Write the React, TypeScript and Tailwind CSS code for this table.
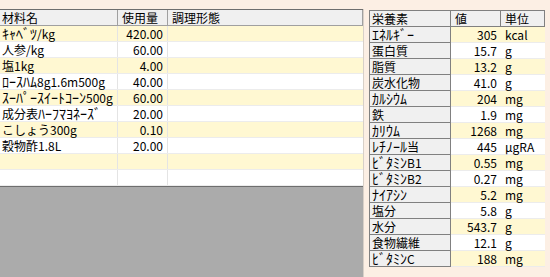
import React from "react";

const ingredients: [string, string][] = [
  ["ｷｬﾍﾞﾂ/kg", "420.00"],
  ["人参/kg", "60.00"],
  ["塩1kg", "4.00"],
  ["ﾛｰｽﾊﾑ8g1.6m500g", "40.00"],
  ["ｽｰﾊﾟｰｽｲｰﾄｺｰﾝ500g", "60.00"],
  ["成分表ﾊｰﾌﾏﾖﾈｰｽﾞ", "20.00"],
  ["こしょう300g", "0.10"],
  ["穀物酢1.8L", "20.00"],
  ["", ""],
  ["", ""],
];

const nutrients: [string, string, string][] = [
  ["ｴﾈﾙｷﾞｰ", "305", "kcal"],
  ["蛋白質", "15.7", "g"],
  ["脂質", "13.2", "g"],
  ["炭水化物", "41.0", "g"],
  ["ｶﾙｼｳﾑ", "204", "mg"],
  ["鉄", "1.9", "mg"],
  ["ｶﾘｳﾑ", "1268", "mg"],
  ["ﾚﾁﾉｰﾙ当", "445", "μgRA"],
  ["ﾋﾞﾀﾐﾝB1", "0.55", "mg"],
  ["ﾋﾞﾀﾐﾝB2", "0.27", "mg"],
  ["ﾅｲｱｼﾝ", "5.2", "mg"],
  ["塩分", "5.8", "g"],
  ["水分", "543.7", "g"],
  ["食物繊維", "12.1", "g"],
  ["ﾋﾞﾀﾐﾝC", "188", "mg"],
];

const font = { fontFamily: '"Noto Sans CJK JP", "Noto Sans", sans-serif' };

function Label({ text }: { text: string }) {
  const parts = text.split(/([\uFF61-\uFF9F]+)/);
  return (
    <>
      {parts.map((p, i) =>
        /[\uFF61-\uFF9F]/.test(p) ? (
          <span key={i} className="inline-block align-top h-[15px] text-[14px] leading-[15px]">
            {p}
          </span>
        ) : (
          <span key={i}>{p}</span>
        )
      )}
    </>
  );
}

export default function App() {
  return (
    <div
      className="w-[550px] h-[277px] bg-[#fcefe4] flex overflow-hidden text-[12px] leading-[15px] text-black"
      style={font}
    >
      {/* Left grid */}
      <div className="w-[364px] mt-[9px] flex flex-col border-r border-[#d8d0c8]">
        <div className="flex h-[17px] bg-[#f0f0f0] border-t border-[#6e6e6e] border-b border-b-[#a0a0a0]">
          <div className="w-[118px] pl-[2px] border-r border-[#a0a0a0]">材料名</div>
          <div className="w-[50px] pl-[4px] border-r border-[#a0a0a0]">使用量</div>
          <div className="flex-1 pl-[4px] border-r border-[#a0a0a0]">調理形態</div>
        </div>
        {ingredients.map(([name, qty], i) => (
          <div
            key={i}
            className={`flex h-[16px] border-b border-[#ececec] ${i % 2 === 0 ? "bg-[#fff8d2]" : "bg-white"}`}
          >
            <div className="w-[118px] pl-[2px] whitespace-nowrap border-r border-[#e4e4e4]">
              <Label text={name} />
            </div>
            <div className="w-[50px] pr-[4px] text-right border-r border-[#e4e4e4]">{qty}</div>
            <div className="flex-1" />
          </div>
        ))}
        <div className="flex-1 bg-[#ababab] border-t border-[#6e6e6e]" />
      </div>

      {/* Right grid */}
      <div className="ml-[5px] mt-[10px] w-[176px] self-start border-t border-l border-[#808080]">
        <div className="flex h-[16px] bg-[#f0f0f0] border-b border-[#808080]">
          <div className="w-[81px] pl-[2px] border-r border-[#808080]">栄養素</div>
          <div className="w-[50px] pl-[4px] border-r border-[#808080]">値</div>
          <div className="flex-1 pl-[4px] border-r border-[#808080]">単位</div>
        </div>
        {nutrients.map(([name, val, unit], i) => (
          <div key={i} className="flex h-[16px]">
            <div className="w-[81px] pl-[2px] bg-[#f0f0f0] border-r border-b border-[#808080] whitespace-nowrap">
              <Label text={name} />
            </div>
            <div
              className={`flex flex-1 border-b border-[#ececec] ${i % 2 === 0 ? "bg-[#fff8d2]" : "bg-white"}`}
            >
              <div className="w-[50px] pr-[4px] text-right">{val}</div>
              <div className="flex-1 pl-[4px]">{unit}</div>
            </div>
          </div>
        ))}
      </div>
    </div>
  );
}
